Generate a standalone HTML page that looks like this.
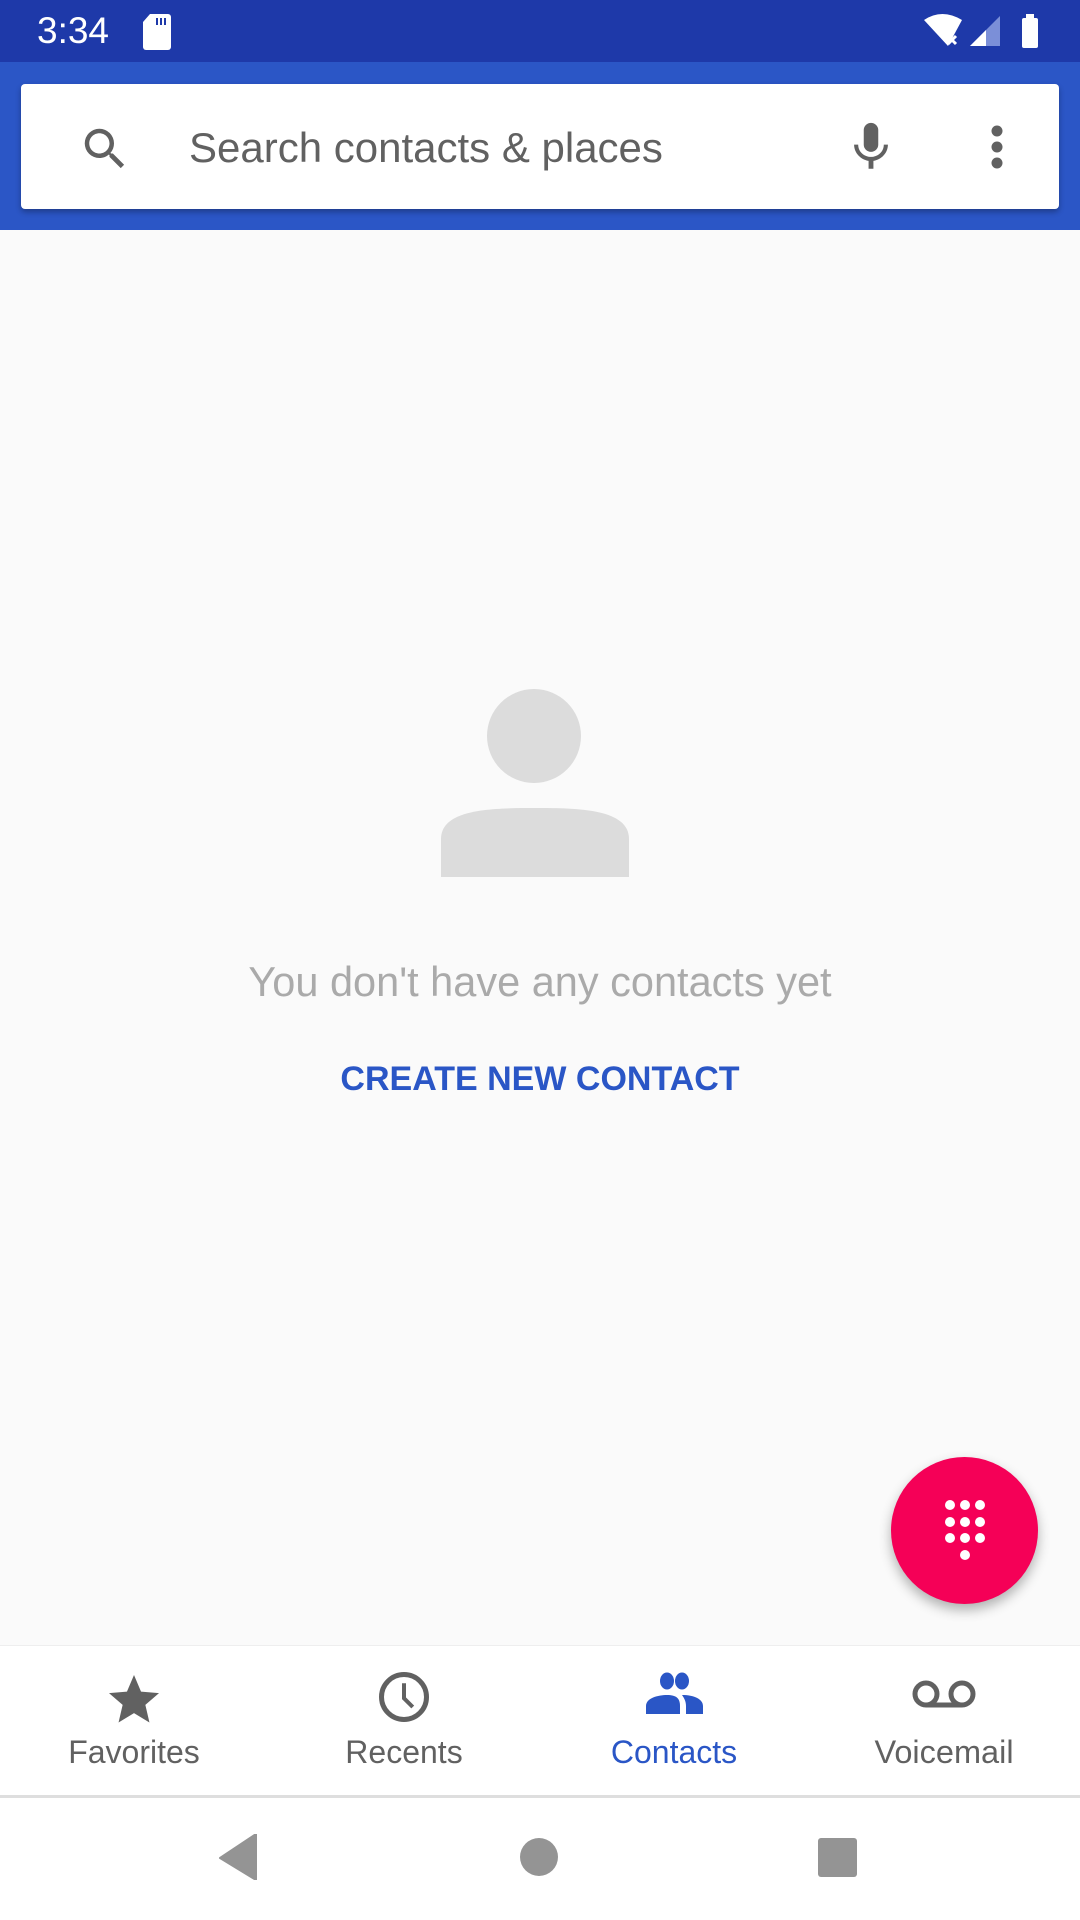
<!DOCTYPE html>
<html><head><meta charset="utf-8"><style>
body{margin:0;width:1080px;height:1920px;position:relative;background:#fafafa;font-family:"Liberation Sans",Roboto,sans-serif;overflow:hidden}
.abs{position:absolute}
</style></head><body>
<div class="abs" style="left:0;top:0;width:1080px;height:62px;background:#1e39a9"></div>
<div class="abs" style="left:37px;top:8px;color:#fff;font-size:37px;line-height:46px">3:34</div>
<svg class="abs" style="left:142px;top:14px" width="30" height="36" viewBox="0 0 30 36"><path d="M8 0H26a3 3 0 0 1 3 3V33a3 3 0 0 1-3 3H4a3 3 0 0 1-3-3V8z" fill="#fff"/><path d="M15 4v7M19 4v7M23 4v7" stroke="#1e39a9" stroke-width="2"/></svg>
<svg class="abs" style="left:922px;top:14px" width="120" height="36" viewBox="0 0 120 36"><path d="M2 6Q20-6 40 6L26 32z" fill="#fff"/><path d="M26 22l8 8M34 22l-8 8" stroke="#fff" stroke-width="3"/><path d="M48 32L78 2V32z" fill="#7b8fd8"/><path d="M48 32L64 16V32z" fill="#fff"/><rect x="100" y="4" width="16" height="30" rx="2" fill="#fff"/><rect x="104" y="0" width="8" height="5" fill="#fff"/></svg>
<div class="abs" style="left:0;top:62px;width:1080px;height:168px;background:#2b56c6"></div>
<div class="abs" style="left:21px;top:84px;width:1038px;height:125px;background:#fff;border-radius:4px;box-shadow:0 3px 6px rgba(0,0,0,.3)"></div>
<svg class="abs" style="left:78px;top:122px" width="54" height="54" viewBox="0 0 24 24"><path fill="#616161" d="M15.5 14h-.79l-.28-.27A6.470 6.470 0 0 0 16 9.5 6.5 6.5 0 1 0 9.5 16c1.61 0 3.09-.59 4.23-1.57l.27.28v.79l5 4.99L20.49 19l-4.99-5zm-6 0C7.01 14 5 11.99 5 9.5S7.01 5 9.5 5 14 7.01 14 9.5 11.99 14 9.5 14z"/></svg>
<div class="abs" style="left:189px;top:121px;font-size:42px;line-height:54px;color:#616161">Search contacts &amp; places</div>
<svg class="abs" style="left:842px;top:118px" width="58" height="58" viewBox="0 0 24 24"><path fill="#616161" d="M12 14c1.66 0 3-1.34 3-3V5c0-1.66-1.34-3-3-3S9 3.34 9 5v6c0 1.66 1.34 3 3 3zm5.3-3c0 3-2.54 5.1-5.3 5.1S6.7 14 6.7 11H5c0 3.41 2.72 6.230 6 6.72V21h2v-3.28c3.28-.48 6-3.3 6-6.72h-1.7z"/></svg>
<svg class="abs" style="left:975px;top:118px" width="44" height="58" viewBox="0 0 44 58"><circle cx="22" cy="13" r="5.5" fill="#616161"/><circle cx="22" cy="29" r="5.5" fill="#616161"/><circle cx="22" cy="45" r="5.5" fill="#616161"/></svg>
<svg class="abs" style="left:441px;top:689px" width="188" height="188" viewBox="0 0 188 188"><circle cx="93" cy="47" r="47" fill="#dcdcdc"/><path d="M0 188V150C0 120 50 119 94 119S188 120 188 150V188z" fill="#dcdcdc"/></svg>
<div class="abs" style="left:0;top:956px;width:1080px;text-align:center;font-size:41.5px;line-height:52px;color:#aaa">You don't have any contacts yet</div>
<div class="abs" style="left:0;top:1056px;width:1080px;text-align:center;font-size:34px;line-height:46px;color:#2a56c6;font-weight:bold">CREATE NEW CONTACT</div>
<div class="abs" style="left:891px;top:1457px;width:147px;height:147px;border-radius:50%;background:#f50057;box-shadow:0 6px 12px rgba(0,0,0,.3)"></div>
<svg class="abs" style="left:935px;top:1495px" width="60" height="70" viewBox="0 0 60 70" fill="#fff"><g><circle cx="15" cy="10" r="5"/><circle cx="30" cy="10" r="5"/><circle cx="45" cy="10" r="5"/><circle cx="15" cy="27" r="5"/><circle cx="30" cy="27" r="5"/><circle cx="45" cy="27" r="5"/><circle cx="15" cy="43" r="5"/><circle cx="30" cy="43" r="5"/><circle cx="45" cy="43" r="5"/><circle cx="30" cy="60" r="5"/></g></svg>
<div class="abs" style="left:0;top:1645px;width:1080px;height:150px;background:#fff;border-top:1px solid #eee"></div>
<svg class="abs" style="left:104px;top:1670px" width="60" height="60" viewBox="0 0 24 24"><path fill="#616161" d="M12 17.27L18.18 21l-1.64-7.03L22 9.24l-7.19-.61L12 2 9.19 8.63 2 9.24l5.46 4.73L5.82 21z"/></svg>
<svg class="abs" style="left:374px;top:1667px" width="60" height="60" viewBox="0 0 24 24"><circle cx="12" cy="12" r="9" fill="none" stroke="#616161" stroke-width="2"/><path d="M12 6.5V12.5l3.5 3.5" fill="none" stroke="#616161" stroke-width="1.6"/></svg>
<svg class="abs" style="left:644px;top:1668px" width="60" height="60" viewBox="0 0 60 60" fill="#2a56c6"><ellipse cx="23" cy="13" rx="7" ry="8.5"/><ellipse cx="38" cy="13" rx="7" ry="8.5"/><path d="M2 46V38C2 30 14 27 23 27S36 30 36 38V46z"/><path d="M38 27C50 27 59 31 59 38V46H42V38C42 33 40 30 38 27z"/></svg>
<svg class="abs" style="left:910px;top:1668px" width="68" height="60" viewBox="0 0 68 60"><circle cx="16" cy="26" r="11" fill="none" stroke="#616161" stroke-width="5"/><circle cx="52" cy="26" r="11" fill="none" stroke="#616161" stroke-width="5"/><path d="M16 37H52" stroke="#616161" stroke-width="5"/></svg>
<div class="abs" style="left:34px;top:1732px;width:200px;text-align:center;font-size:32px;line-height:40px;color:#616161">Favorites</div>
<div class="abs" style="left:304px;top:1732px;width:200px;text-align:center;font-size:32px;line-height:40px;color:#616161">Recents</div>
<div class="abs" style="left:574px;top:1732px;width:200px;text-align:center;font-size:32px;line-height:40px;color:#2a56c6">Contacts</div>
<div class="abs" style="left:844px;top:1732px;width:200px;text-align:center;font-size:32.5px;line-height:40px;color:#616161">Voicemail</div>
<div class="abs" style="left:0;top:1795px;width:1080px;height:3px;background:#dedede"></div>
<div class="abs" style="left:0;top:1798px;width:1080px;height:122px;background:#fff"></div>
<svg class="abs" style="left:218px;top:1834px" width="40" height="46" viewBox="0 0 40 46"><path d="M38 0V46L2 24z" fill="#949494" stroke="#949494" stroke-width="2" stroke-linejoin="round"/></svg>
<div class="abs" style="left:520px;top:1838px;width:38px;height:38px;border-radius:50%;background:#949494"></div>
<div class="abs" style="left:818px;top:1838px;width:39px;height:39px;border-radius:3px;background:#949494"></div>
</body></html>
